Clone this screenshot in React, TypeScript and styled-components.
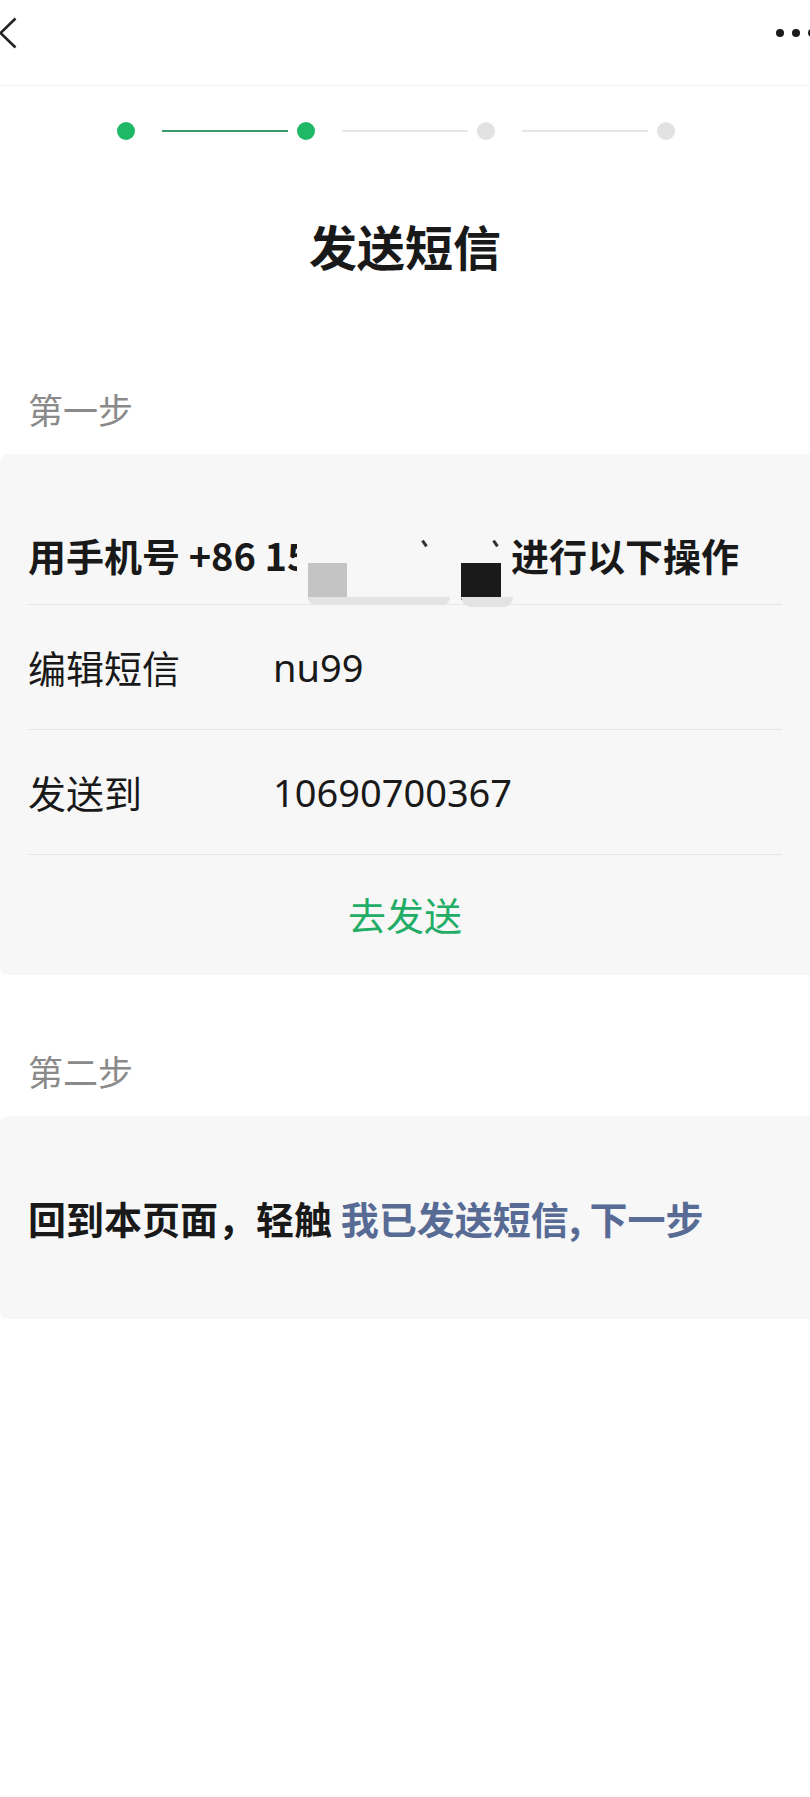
import styled, { createGlobalStyle } from 'styled-components';

const GlobalStyle = createGlobalStyle`
  body {
    margin: 0;
    background: #ffffff;
    font-family: "Noto Sans CJK SC", "Noto Sans", sans-serif;
    color: #191919;
    overflow-x: hidden;
  }
`;

const steps = [true, true, false, false];

export default function App() {
  return (
    <Page>
      <GlobalStyle />
      <TopBar>
        <BackIcon width="20" height="32" viewBox="0 0 20 32">
          <path d="M16.5 1.5 L1.5 16 L16.5 30.5" fill="none" stroke="#222" strokeWidth="2.6" />
        </BackIcon>
        <MoreDots>
          <Dot />
          <Dot />
          <Dot />
        </MoreDots>
      </TopBar>

      <Stepper>
        {steps.map((done, i) => (
          <Step key={i}>
            <StepDot $active={done} />
            {i < steps.length - 1 && <StepLine $active={steps[i + 1]} />}
          </Step>
        ))}
      </Stepper>

      <Title>发送短信</Title>

      <SectionLabel>第一步</SectionLabel>
      <Card>
        <HeadRow>
          用手机号 +86 1<Clip>5</Clip>
          <Censor>
            <GrayBlock />
            <Smear />
            <Tick $left={126} />
            <Tick $left={197} />
            <BlackBlock />
            <SmearSmall />
          </Censor>
          进行以下操作
        </HeadRow>
        <Row>
          <Label>编辑短信</Label>
          <Value>nu99</Value>
        </Row>
        <Row>
          <Label>发送到</Label>
          <Value>10690700367</Value>
        </Row>
        <ActionRow>去发送</ActionRow>
      </Card>

      <SectionLabel $second>第二步</SectionLabel>
      <NoteCard>
        <NoteText>
          回到本页面，轻触 <Link>我已发送短信, 下一步</Link>
        </NoteText>
      </NoteCard>
    </Page>
  );
}

const Page = styled.div`
  min-height: 1797px;
  background: #ffffff;
`;

const TopBar = styled.div`
  height: 86px;
  display: flex;
  justify-content: space-between;
  align-items: flex-start;
  padding-top: 17px;
  box-sizing: border-box;
  border-bottom: 1px solid #f2f2f2;
  overflow: hidden;
`;

const BackIcon = styled.svg`
  display: block;
  margin-left: -1px;
`;

const MoreDots = styled.div`
  display: flex;
  gap: 8px;
  margin-top: 12px;
  margin-right: -6px;
`;

const Dot = styled.span`
  width: 8px;
  height: 8px;
  border-radius: 50%;
  background: #1a1a1a;
`;

const Stepper = styled.div`
  display: flex;
  align-items: center;
  padding: 36px 0 0 117px;
`;

const Step = styled.div`
  display: flex;
  align-items: center;
`;

const StepDot = styled.span<{ $active: boolean }>`
  width: 18px;
  height: 18px;
  border-radius: 50%;
  background: ${(p) => (p.$active ? '#1fb866' : '#e2e2e2')};
`;

const StepLine = styled.span<{ $active: boolean }>`
  width: 126px;
  height: 2px;
  margin: 0 9px 0 27px;
  background: ${(p) => (p.$active ? '#3a9a6c' : '#e6e6e6')};
`;

const Title = styled.h1`
  margin: 77px 0 0;
  text-align: center;
  font-size: 48px;
  line-height: 56px;
  font-weight: 700;
  color: #191919;
`;

const SectionLabel = styled.div<{ $second?: boolean }>`
  margin-top: ${(p) => (p.$second ? '74px' : '114px')};
  padding-left: 28px;
  font-size: 35px;
  line-height: 44px;
  color: #8a8a8a;
`;

const Card = styled.div`
  margin-top: 23px;
  background: #f7f7f7;
  border-radius: 8px 0 0 8px;
  padding: 0 28px;
`;

const HeadRow = styled.div`
  padding: 76px 0 24px;
  font-size: 38px;
  line-height: 50px;
  font-weight: 700;
  color: #191919;
  white-space: nowrap;
`;

const Clip = styled.span`
  display: inline-block;
  width: 10px;
  overflow: hidden;
  vertical-align: top;
`;

const Censor = styled.span`
  position: relative;
  display: inline-block;
  width: 214px;
  height: 50px;
  vertical-align: top;
`;

const GrayBlock = styled.span`
  position: absolute;
  left: 11px;
  top: 33px;
  width: 39px;
  height: 37px;
  background: #c4c4c4;
`;

const Smear = styled.span`
  position: absolute;
  left: 11px;
  top: 67px;
  width: 142px;
  height: 8px;
  border-radius: 0 0 40px 40px;
  background: #e3e3e3;
`;

const SmearSmall = styled.span`
  position: absolute;
  left: 164px;
  top: 67px;
  width: 52px;
  height: 10px;
  border-radius: 0 0 30px 30px;
  background: #e3e3e3;
`;

const Tick = styled.span<{ $left: number }>`
  position: absolute;
  left: ${(p) => p.$left}px;
  top: 10px;
  width: 3px;
  height: 7px;
  background: #333;
  transform: rotate(-35deg);
`;

const BlackBlock = styled.span`
  position: absolute;
  left: 164px;
  top: 33px;
  width: 40px;
  height: 37px;
  background: #1a1a1a;
`;

const Row = styled.div`
  display: flex;
  align-items: center;
  padding: 37px 0;
  border-top: 1px solid #e6e6e6;
  font-size: 38px;
  line-height: 50px;
  color: #191919;
`;

const Label = styled.span`
  width: 245px;
  flex-shrink: 0;
`;

const Value = styled.span`
  font-family: "Noto Sans", "Noto Sans CJK SC", sans-serif;
`;

const ActionRow = styled.div`
  padding: 34px 0 36px;
  border-top: 1px solid #e6e6e6;
  text-align: center;
  font-size: 38px;
  line-height: 50px;
  color: #22ad66;
`;

const NoteCard = styled.div`
  margin-top: 23px;
  height: 203px;
  display: flex;
  align-items: center;
  padding: 0 28px;
  background: #f7f7f7;
  border-radius: 8px 0 0 8px;
`;

const NoteText = styled.div`
  font-size: 38px;
  line-height: 50px;
  font-weight: 700;
  color: #191919;
  white-space: nowrap;
`;

const Link = styled.span`
  color: #576b95;
`;
